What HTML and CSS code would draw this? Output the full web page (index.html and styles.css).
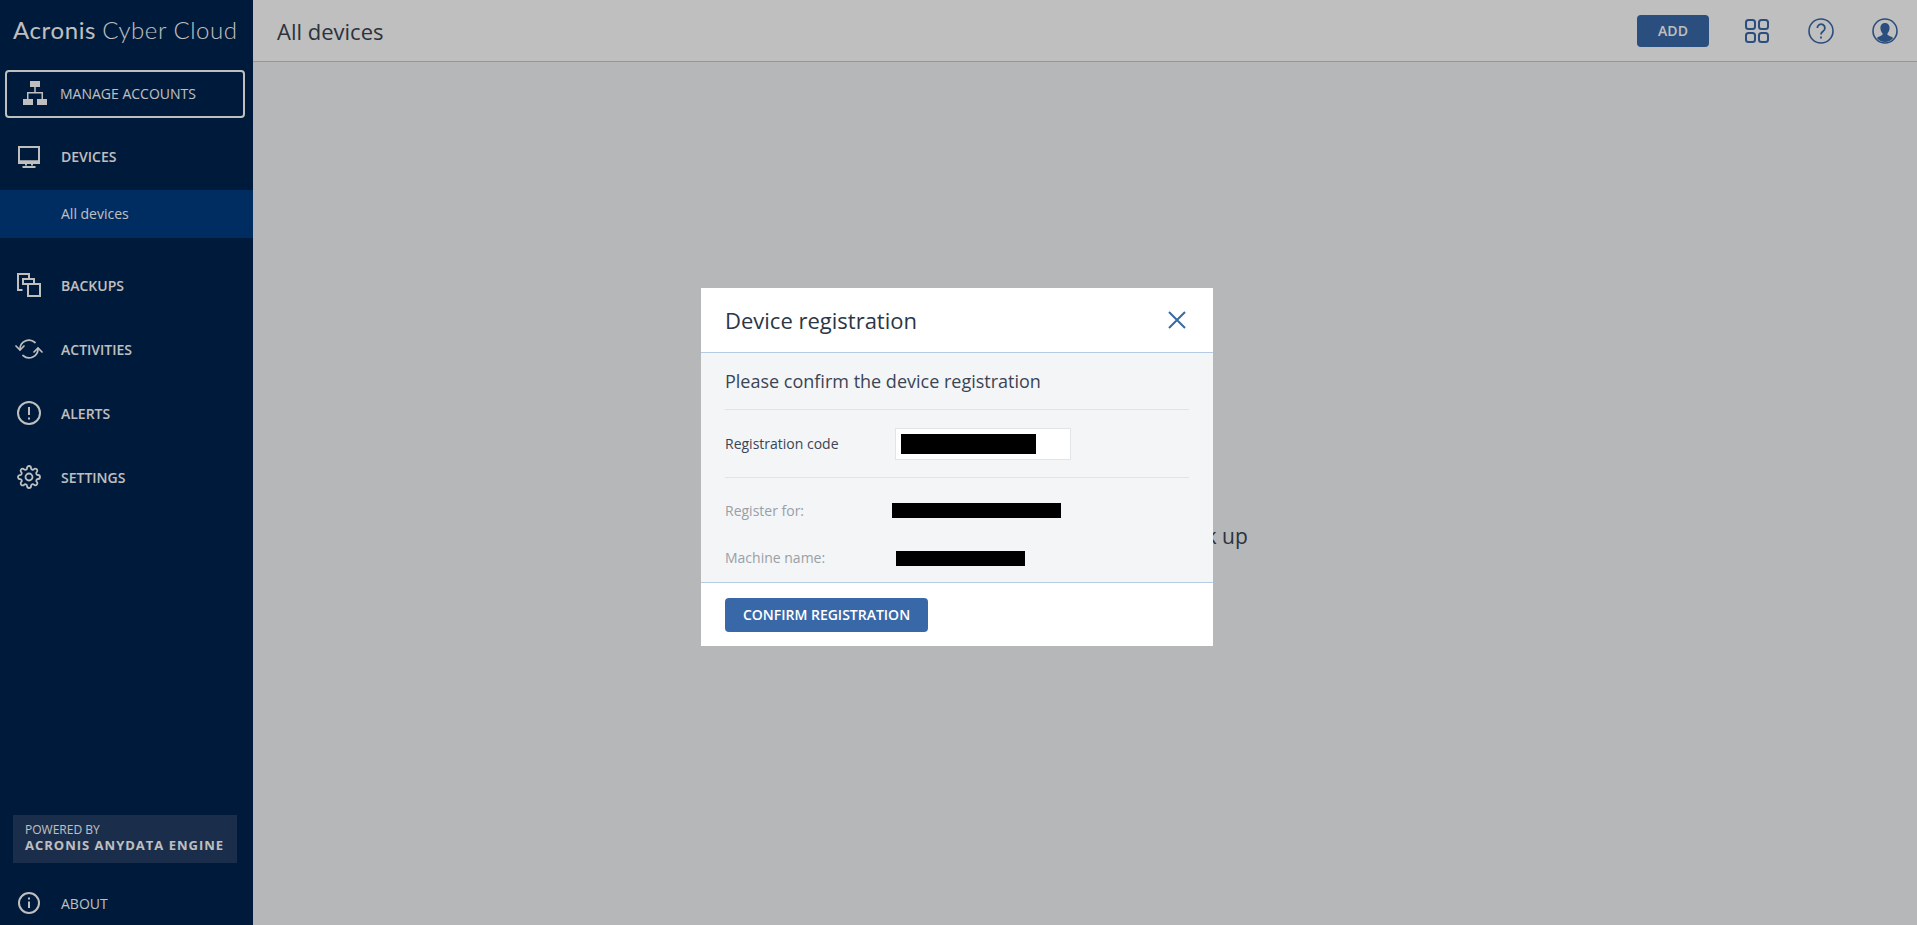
FILE: index.html
```html
<!DOCTYPE html>
<html lang="en">
<head>
<meta charset="utf-8">
<title>All devices</title>
<link rel="stylesheet" href="styles.css">
</head>
<body>
<div class="app">
  <aside class="sidebar">
    <div class="logo"><span class="logo-strong">Acronis</span> <span class="logo-light">Cyber Cloud</span></div>
    <a class="manage">
      <svg class="ico-manage" width="24" height="24" viewBox="0 0 24 24" fill="currentColor"><path d="M7 0h10v6H7zM0 18h10v6H0zM14 18h10v6H14z"/><path d="M11.25 6h1.5v5H20v7h-1.5v-5.5h-13V18H4v-7h7.25z"/></svg>
      <span>MANAGE ACCOUNTS</span>
    </a>
    <nav class="nav">
      <a class="nav-item nav-first">
        <span class="nav-icon"><svg width="22" height="22" viewBox="0 0 22 22" fill="none" stroke="currentColor" stroke-width="2"><path d="M1 1h20v14.500H1z"/><path d="M1 15.500h20v1.500H1zM8 17v2.500M14 17v2.500M4.500 21h13"/></svg></span>
        <span>DEVICES</span>
      </a>
      <a class="nav-sub">All devices</a>
      <a class="nav-item nav-gap">
        <span class="nav-icon"><svg width="24" height="24" viewBox="0 0 24 24" fill="none" stroke="currentColor" stroke-width="2"><path d="M5.500 17H1V1h11v4.500"/><path d="M11 11H6V6h11v5"/><rect x="11" y="11" width="12" height="12"/></svg></span>
        <span>BACKUPS</span>
      </a>
      <a class="nav-item">
        <span class="nav-icon"><svg width="28" height="20" viewBox="0 0 28 20" fill="none" stroke="currentColor" stroke-width="1.700" stroke-linecap="round"><path d="M5 10.500A9 9 0 0 1 20 3.500"/><path d="M1 7l4 4 4-4"/><path d="M23 9.500A9 9 0 0 1 8 16.500"/><path d="M19 13l4-4 4 4"/></svg></span>
        <span>ACTIVITIES</span>
      </a>
      <a class="nav-item">
        <span class="nav-icon"><svg width="24" height="24" viewBox="0 0 24 24" fill="none" stroke="currentColor" stroke-width="2"><circle cx="12" cy="12" r="11"/><path d="M12 6v8M12 16.500v2"/></svg></span>
        <span>ALERTS</span>
      </a>
      <a class="nav-item">
        <span class="nav-icon"><svg width="24" height="24" viewBox="0 0 24 24" fill="none" stroke="currentColor" stroke-width="1.800"><path d="M12 15.500a3.500 3.500 0 1 0 0-7 3.500 3.500 0 0 0 0 7z"/><path d="M19.400 15a1.650 1.650 0 0 0 .33 1.820l.06.06a2 2 0 0 1 0 2.830 2 2 0 0 1-2.830 0l-.06-.06a1.650 1.650 0 0 0-1.820-.33 1.650 1.650 0 0 0-1 1.510V21a2 2 0 0 1-2 2 2 2 0 0 1-2-2v-.09A1.650 1.650 0 0 0 9 19.400a1.650 1.650 0 0 0-1.820.33l-.06.06a2 2 0 0 1-2.830 0 2 2 0 0 1 0-2.830l.06-.06a1.650 1.650 0 0 0 .33-1.820 1.650 1.650 0 0 0-1.510-1H3a2 2 0 0 1-2-2 2 2 0 0 1 2-2h.09A1.650 1.650 0 0 0 4.600 9a1.650 1.650 0 0 0-.33-1.820l-.06-.06a2 2 0 0 1 0-2.830 2 2 0 0 1 2.830 0l.06.06a1.650 1.650 0 0 0 1.820.33H9a1.650 1.650 0 0 0 1-1.510V3a2 2 0 0 1 2-2 2 2 0 0 1 2 2v.09a1.650 1.650 0 0 0 1 1.510 1.650 1.650 0 0 0 1.820-.33l.06-.06a2 2 0 0 1 2.830 0 2 2 0 0 1 0 2.830l-.06.06a1.650 1.650 0 0 0-.33 1.820V9a1.650 1.650 0 0 0 1.510 1H21a2 2 0 0 1 2 2 2 2 0 0 1-2 2h-.09a1.650 1.650 0 0 0-1.510 1z"/></svg></span>
        <span>SETTINGS</span>
      </a>
    </nav>
    <div class="powered">
      <div class="powered-top">POWERED BY</div>
      <div class="powered-name">ACRONIS ANYDATA ENGINE</div>
    </div>
    <a class="about">
      <span class="nav-icon"><svg width="22" height="22" viewBox="0 0 22 22" fill="none" stroke="currentColor" stroke-width="2"><circle cx="11" cy="11" r="10"/><path d="M11 9.500v6.500M11 5.500v2"/></svg></span>
      <span>ABOUT</span>
    </a>
  </aside>
  <main class="main">
    <header class="topbar">
      <h1 class="page-title">All devices</h1>
      <div class="top-actions">
        <button class="btn-add">ADD</button>
        <svg class="top-grid" width="26" height="26" viewBox="0 0 26 26" fill="none" stroke="currentColor" stroke-width="2"><rect x="2" y="2" width="9" height="9" rx="2.500"/><rect x="15" y="2" width="9" height="9" rx="2.500"/><rect x="2" y="15" width="9" height="9" rx="2.500"/><rect x="15" y="15" width="9" height="9" rx="2.500"/></svg>
        <svg class="top-help" width="26" height="26" viewBox="0 0 26 26" fill="none" stroke="currentColor" stroke-width="1.600"><circle cx="13" cy="13" r="12"/><path d="M9.300 10a3.800 3.800 0 1 1 5.800 3.200c-1.400.9-2.100 1.600-2.100 3.300" stroke-width="1.800"/><path d="M13 18.500v2" stroke-width="1.800"/></svg>
        <svg class="top-user" width="26" height="26" viewBox="0 0 26 26"><circle cx="13" cy="13" r="12" fill="none" stroke="currentColor" stroke-width="1.600"/><path fill="currentColor" d="M13 5c3 0 4.600 2.300 4.600 5 0 2.200-.9 4.200-2.100 5.200v1.600c0 .7 3.600 1.500 5.600 3.200A11 11 0 0 1 13 24a11 11 0 0 1-8.100-4c2-1.700 5.600-2.500 5.600-3.200v-1.600C9.300 14.200 8.400 12.200 8.400 10c0-2.700 1.600-5 4.600-5z"/></svg>
      </div>
    </header>
    <section class="content">
      <p class="empty">There are no devices to back up</p>
    </section>
  </main>
</div>
<div class="overlay">
  <div class="modal">
    <div class="modal-head">
      <h2 class="modal-title">Device registration</h2>
      <svg class="modal-close" width="18" height="18" viewBox="0 0 18 18" fill="none" stroke="currentColor" stroke-width="2"><path d="M1 1l16 16M17 1L1 17"/></svg>
    </div>
    <div class="modal-body">
      <div class="modal-sub">Please confirm the device registration</div>
      <div class="code-row">
        <span class="code-label">Registration code</span>
        <div class="code-input"><span class="mask mask-code"></span></div>
      </div>
      <div class="info-row info-first">
        <span class="info-label label-for">Register for:</span>
        <span class="mask mask-for"></span>
      </div>
      <div class="info-row">
        <span class="info-label label-name">Machine name:</span>
        <span class="mask mask-name"></span>
      </div>
    </div>
    <div class="modal-foot">
      <button class="btn-confirm">CONFIRM REGISTRATION</button>
    </div>
  </div>
</div>
</body>
</html>
```
FILE: styles.css
```css
* { box-sizing: border-box; }
html, body { margin: 0; height: 100%; overflow: hidden; }
body { font-family: "Open Sans", "Liberation Sans", sans-serif; color: #3a4454; }
a { display: block; }
h1, h2, p { margin: 0; font-weight: 400; }
svg { display: block; }

.app { display: flex; height: 925px; }

.sidebar {
  width: 253px;
  flex: none;
  background: #00234f;
  color: #fff;
  display: flex;
  flex-direction: column;
}
.logo {
  height: 62px;
  padding: 15px 0 0 13px;
  font-family: "Lato", sans-serif;
  font-size: 24px;
  line-height: 30px;
  white-space: nowrap;
}
.logo-strong { font-weight: 400; letter-spacing: 0.6px; }
.logo-light { font-weight: 300; letter-spacing: 0.55px; }

.manage {
  margin: 8px 8px 0 5px;
  height: 48px;
  border: 2px solid #fff;
  border-radius: 4px;
  display: flex;
  align-items: center;
  font-size: 14px;
  padding: 0 0 2px 16px;
}
.ico-manage { margin-right: 13px; }

.nav { display: flex; flex-direction: column; }
.nav-item {
  height: 64px;
  display: flex;
  align-items: center;
  font-size: 14px;
  font-weight: 600;
}
.nav-icon {
  width: 61px;
  flex: none;
  display: flex;
  justify-content: center;
  padding-right: 3px;
}
.nav-first { height: 72px; padding-top: 5px; }
.nav-sub {
  height: 48px;
  line-height: 48px;
  padding-left: 61px;
  font-size: 14px;
  background: #003c82;
}
.nav-gap { margin-top: 15px; }

.powered {
  margin: auto 16px 0 13px;
  height: 48px;
  padding: 7px 12px 0;
  background: #233c65;
}
.powered-top { font-size: 12px; line-height: 15px; }
.powered-name { font-size: 13px; font-weight: 700; letter-spacing: 1px; line-height: 16px; white-space: nowrap; }
.about {
  margin-top: 16px;
  height: 46px;
  padding-top: 2px;
  display: flex;
  align-items: center;
  font-size: 14px;
}

.main { flex: 1; display: flex; flex-direction: column; min-width: 0; background: #f3f4f6; }
.topbar {
  height: 62px;
  flex: none;
  background: #fff;
  border-bottom: 1px solid #b9cbe8;
  display: flex;
  align-items: center;
  justify-content: space-between;
  padding: 0 19px 0 24px;
}
.page-title { font-size: 22px; line-height: 30px; }
.top-actions { display: flex; align-items: center; color: #3968a8; }
.btn-add {
  width: 72px;
  height: 32px;
  border: 0;
  border-radius: 4px;
  background: #3968a8;
  color: #fff;
  font: 600 14px "Open Sans", sans-serif;
  padding: 0;
}
.top-grid { margin-left: 35px; }
.top-help { margin-left: 38px; }
.top-user { margin-left: 38px; }

.content { flex: 1; display: flex; justify-content: center; padding-top: 459px; }
.empty { font-size: 21px; line-height: 30px; height: 30px; white-space: nowrap; padding-left: 15px; }

.overlay {
  position: fixed;
  inset: 0;
  background: rgba(0, 0, 0, 0.25);
  display: flex;
  justify-content: center;
  align-items: flex-start;
  padding: 288px 3px 0 0;
}
.modal { width: 512px; background: #fff; display: flex; flex-direction: column; }
.modal-head {
  height: 65px;
  display: flex;
  align-items: center;
  justify-content: space-between;
  padding: 0 27px 0 24px;
  border-bottom: 1px solid #b4cbe3;
}
.modal-title { font-size: 22px; line-height: 30px; color: #2c3646; }
.modal-close { color: #3968a8; }
.modal-body { background: #f3f5f7; padding: 0 24px; }
.modal-sub {
  height: 57px;
  border-bottom: 1px solid #e0e3e7;
  display: flex;
  align-items: center;
  font-size: 18px;
  color: #3a4454;
}
.code-row {
  height: 68px;
  border-bottom: 1px solid #e0e3e7;
  display: flex;
  align-items: center;
  font-size: 14px;
}
.code-label { width: 170px; flex: none; }
.code-input {
  width: 176px;
  height: 32px;
  border: 1px solid #e2e5e8;
  background: #fff;
  padding: 5px 5px;
}
.mask { display: block; background: #000; }
.mask-code { width: 135px; height: 20px; }
.info-row { height: 48px; display: flex; align-items: center; font-size: 14px; color: #9a9fa7; }
.info-first { margin-top: 8px; }
.info-label { flex: none; }
.label-for { width: 167px; }
.label-name { width: 171px; padding-bottom: 2px; }
.mask-for { width: 169px; height: 15px; }
.mask-name { width: 129px; height: 15px; }
.modal-foot {
  height: 64px;
  border-top: 1px solid #b4cbe3;
  padding: 15px 24px;
  background: #fff;
}
.btn-confirm {
  width: 203px;
  height: 34px;
  border: 0;
  border-radius: 4px;
  background: #3968a8;
  color: #fff;
  font: 600 14px "Open Sans", sans-serif;
  padding: 0 0 2px;
}
```
